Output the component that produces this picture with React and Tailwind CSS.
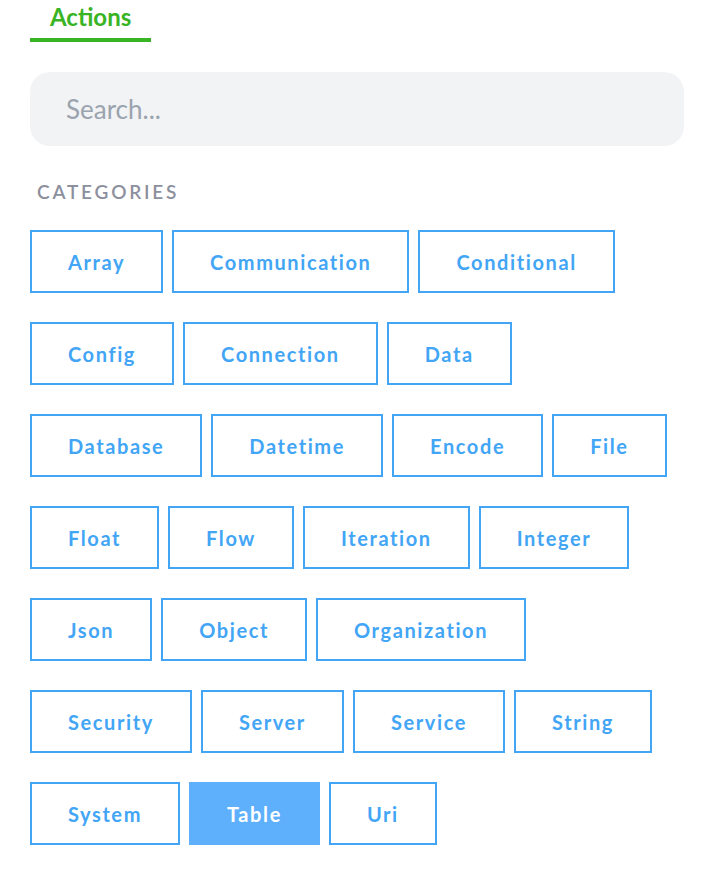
import React, { useState } from 'react';

const categories = [
    'Array', 'Communication', 'Conditional', 'Config', 'Connection', 'Data',
    'Database', 'Datetime', 'Encode', 'File', 'Float', 'Flow', 'Iteration',
    'Integer', 'Json', 'Object', 'Organization', 'Security', 'Server',
    'Service', 'String', 'System', 'Table', 'Uri'
];

const App = () => {
    const [selected, setSelected] = useState('Table');
    const [query, setQuery] = useState('');

    return (
        <div className="min-h-screen bg-white pl-[30px] pr-[26px] font-['Lato','Noto_Sans',sans-serif]">
            <div className="flex">
                <div className="w-[121px] border-b-[4px] border-[#38b424] pb-[5px] pl-[20px]">
                    <span className="block text-[24px] font-bold text-[#38b424] leading-[33px]">Actions</span>
                </div>
            </div>

            <div className="mt-[30px]">
                <input
                    type="text"
                    value={query}
                    onChange={(e) => setQuery(e.target.value)}
                    placeholder="Search..."
                    className="w-full h-[74px] rounded-[20px] bg-[#f2f3f5] px-[36px] text-[26px] text-gray-700 placeholder:text-[#9aa3ae] focus:outline-none"
                />
            </div>

            <h3 className="mt-[35px] pl-[7px] text-[19px] font-semibold tracking-[2.8px] text-[#8c8f9e] leading-[22px]">CATEGORIES</h3>

            <div className="mt-[27px] flex flex-wrap gap-x-[9px] gap-y-[29px]">
                {categories.map((c) => (
                    <button
                        key={c}
                        onClick={() => setSelected(c)}
                        className={`h-[63px] px-[36px] border-2 text-[20px] font-bold tracking-[1.6px] ${selected === c ? 'bg-[#5eb0fd] border-[#5eb0fd] text-white' : 'bg-white border-[#42a5f5] text-[#42a5f5]'}`}
                    >
                        {c}
                    </button>
                ))}
            </div>
        </div>
    );
};

export default App;
